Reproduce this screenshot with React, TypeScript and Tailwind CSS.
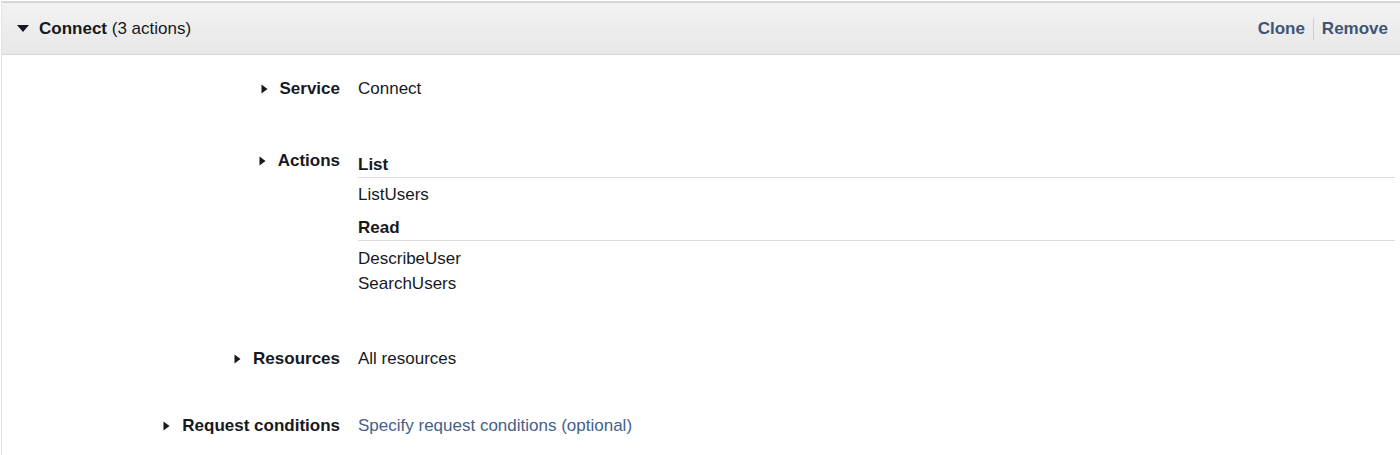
import React from 'react'

function CaretRight() {
  return (
    <svg width="7" height="10" viewBox="0 0 7 10" className="shrink-0">
      <path d="M0.5 0.5 L6.5 5 L0.5 9.5 Z" fill="#16191f" />
    </svg>
  )
}

function CaretDown() {
  return (
    <svg width="12" height="7" viewBox="0 0 12 7" className="shrink-0">
      <path d="M0 0 L12 0 L6 7 Z" fill="#16191f" />
    </svg>
  )
}

function Label({ children }: { children: React.ReactNode }) {
  return (
    <div className="w-[338px] h-6 shrink-0 flex items-center justify-end gap-[12px] font-bold leading-6">
      <CaretRight />
      <span>{children}</span>
    </div>
  )
}

export default function App() {
  return (
    <div
      className="w-[1400px] h-[455px] bg-white text-[17px] text-[#16191f] overflow-hidden"
      style={{ fontFamily: '"Liberation Sans", Arial, sans-serif' }}
    >
      <div className="ml-px mt-px border-l border-[#e4e4e4] h-full">
        {/* Header */}
        <div className="h-[54px] border-t-2 border-b border-[#d6d6d6] bg-gradient-to-b from-[#f2f2f2] to-[#e8e8e8] flex items-center pl-[15px] pr-[12px]">
          <CaretDown />
          <div className="ml-[10px] leading-6">
            <span className="font-bold">Connect</span> (3 actions)
          </div>
          <div className="ml-auto flex items-center font-bold text-[#3d5576]">
            <span>Clone</span>
            <span className="mx-[8px] h-[22px] w-px bg-[#cfcfcf]" />
            <span>Remove</span>
          </div>
        </div>

        {/* Body */}
        <div className="pt-[22px] pr-[5px]">
          <div className="flex items-start gap-[18px]">
            <Label>Service</Label>
            <div className="leading-6">Connect</div>
          </div>

          <div className="flex items-start gap-[18px] mt-[48px]">
            <Label>Actions</Label>
            <div className="flex-1 pt-[4px]">
              <div className="font-bold leading-6 border-b border-[#dcdcdc]">List</div>
              <div className="mt-[4px] leading-[25px]">ListUsers</div>
              <div className="mt-[9px] font-bold leading-6 border-b border-[#dcdcdc]">Read</div>
              <div className="mt-[5px] leading-[25px]">DescribeUser</div>
              <div className="leading-[25px]">SearchUsers</div>
            </div>
          </div>

          <div className="flex items-start gap-[18px] mt-[51px]">
            <Label>Resources</Label>
            <div className="leading-6">All resources</div>
          </div>

          <div className="flex items-start gap-[18px] mt-[43px]">
            <Label>Request conditions</Label>
            <div className="leading-6 text-[#44618a]">Specify request conditions (optional)</div>
          </div>
        </div>
      </div>
    </div>
  )
}
